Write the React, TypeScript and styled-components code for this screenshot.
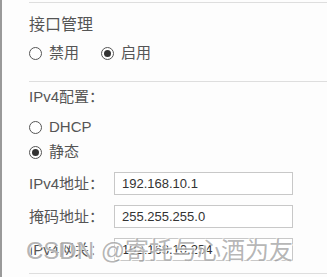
import styled, { createGlobalStyle } from 'styled-components';

const Global = createGlobalStyle`
  html, body {
    margin: 0;
    padding: 0;
    background: #fdfdfd;
  }
`

const Page = styled.div`
  position: relative;
  width: 325px;
  height: 277px;
  border-left: 2px solid #9a9a9a;
  background: #fdfdfd;
  overflow: hidden;
  font-family: "Liberation Sans", "Noto Sans CJK SC", sans-serif;
  color: #555;
`

const Spacer = styled.div`
  height: 2px;
`

const Section = styled.div`
  margin-left: 27px;
  border-top: 1px solid #dedede;
`

const Heading = styled.div`
  font-size: 16px;
  line-height: 20px;
  padding-top: 12px;
  color: #555;
`

const SubHeading = styled.div`
  font-size: 15px;
  line-height: 20px;
  padding-top: 5px;
  color: #555;
`

const RadioRow = styled.div`
  display: flex;
  gap: 22px;
  padding-top: 8px;
  padding-bottom: 18px;
`

const RadioList = styled.div`
  display: flex;
  flex-direction: column;
  gap: 5px;
  padding-top: 10px;
  padding-bottom: 10px;
`

const Radio = styled.label`
  display: flex;
  align-items: center;
  gap: 7px;
  font-size: 15px;
  line-height: 20px;
  color: #555;
`

const Circle = styled.span<{ $on?: boolean }>`
  width: 11px;
  height: 11px;
  border-radius: 50%;
  border: 1px solid #555;
  display: flex;
  align-items: center;
  justify-content: center;
  background: #fff;

  &::after {
    content: '';
    width: 7px;
    height: 7px;
    border-radius: 50%;
    background: ${p => (p.$on ? '#333' : 'transparent')};
  }
`

const Fields = styled.div`
  display: flex;
  flex-direction: column;
  gap: 10px;
  padding-bottom: 12px;
`

const Field = styled.div`
  display: flex;
  align-items: center;
`

const Label = styled.span`
  width: 85px;
  font-size: 15px;
  line-height: 20px;
  color: #555;
`

const Input = styled.div`
  box-sizing: border-box;
  width: 179px;
  height: 23px;
  border: 1px solid #c8c8c8;
  background: #fff;
  padding-left: 7px;
  font-size: 13px;
  line-height: 21px;
  color: #333;
`

const Watermark = styled.div`
  position: absolute;
  left: 24px;
  top: 236px;
  font-family: "Liberation Sans", "Noto Sans CJK SC", sans-serif;
  font-size: 24px;
  line-height: 30px;
  color: rgba(140, 140, 140, 0.65);
  text-shadow: 1px 1px 0 rgba(255, 255, 255, 0.9), -1px -1px 0 rgba(255, 255, 255, 0.6);
  white-space: nowrap;
`

const fields = [
  { label: 'IPv4地址：', value: '192.168.10.1' },
  { label: '掩码地址：', value: '255.255.255.0' },
  { label: 'IPv4网关：', value: '192.168.10.254' },
]

const App = () => {
  return (
    <Page>
      <Global />
      <Spacer />
      <Section>
        <Heading>接口管理</Heading>
        <RadioRow>
          <Radio><Circle />禁用</Radio>
          <Radio><Circle $on />启用</Radio>
        </RadioRow>
      </Section>
      <Section>
        <SubHeading>IPv4配置：</SubHeading>
        <RadioList>
          <Radio><Circle />DHCP</Radio>
          <Radio><Circle $on />静态</Radio>
        </RadioList>
        <Fields>
          {fields.map(f => (
            <Field key={f.label}>
              <Label>{f.label}</Label>
              <Input>{f.value}</Input>
            </Field>
          ))}
        </Fields>
      </Section>
      <Section />
      <Watermark>CSDN @寄托与心酒为友</Watermark>
    </Page>
  )
}

export default App
